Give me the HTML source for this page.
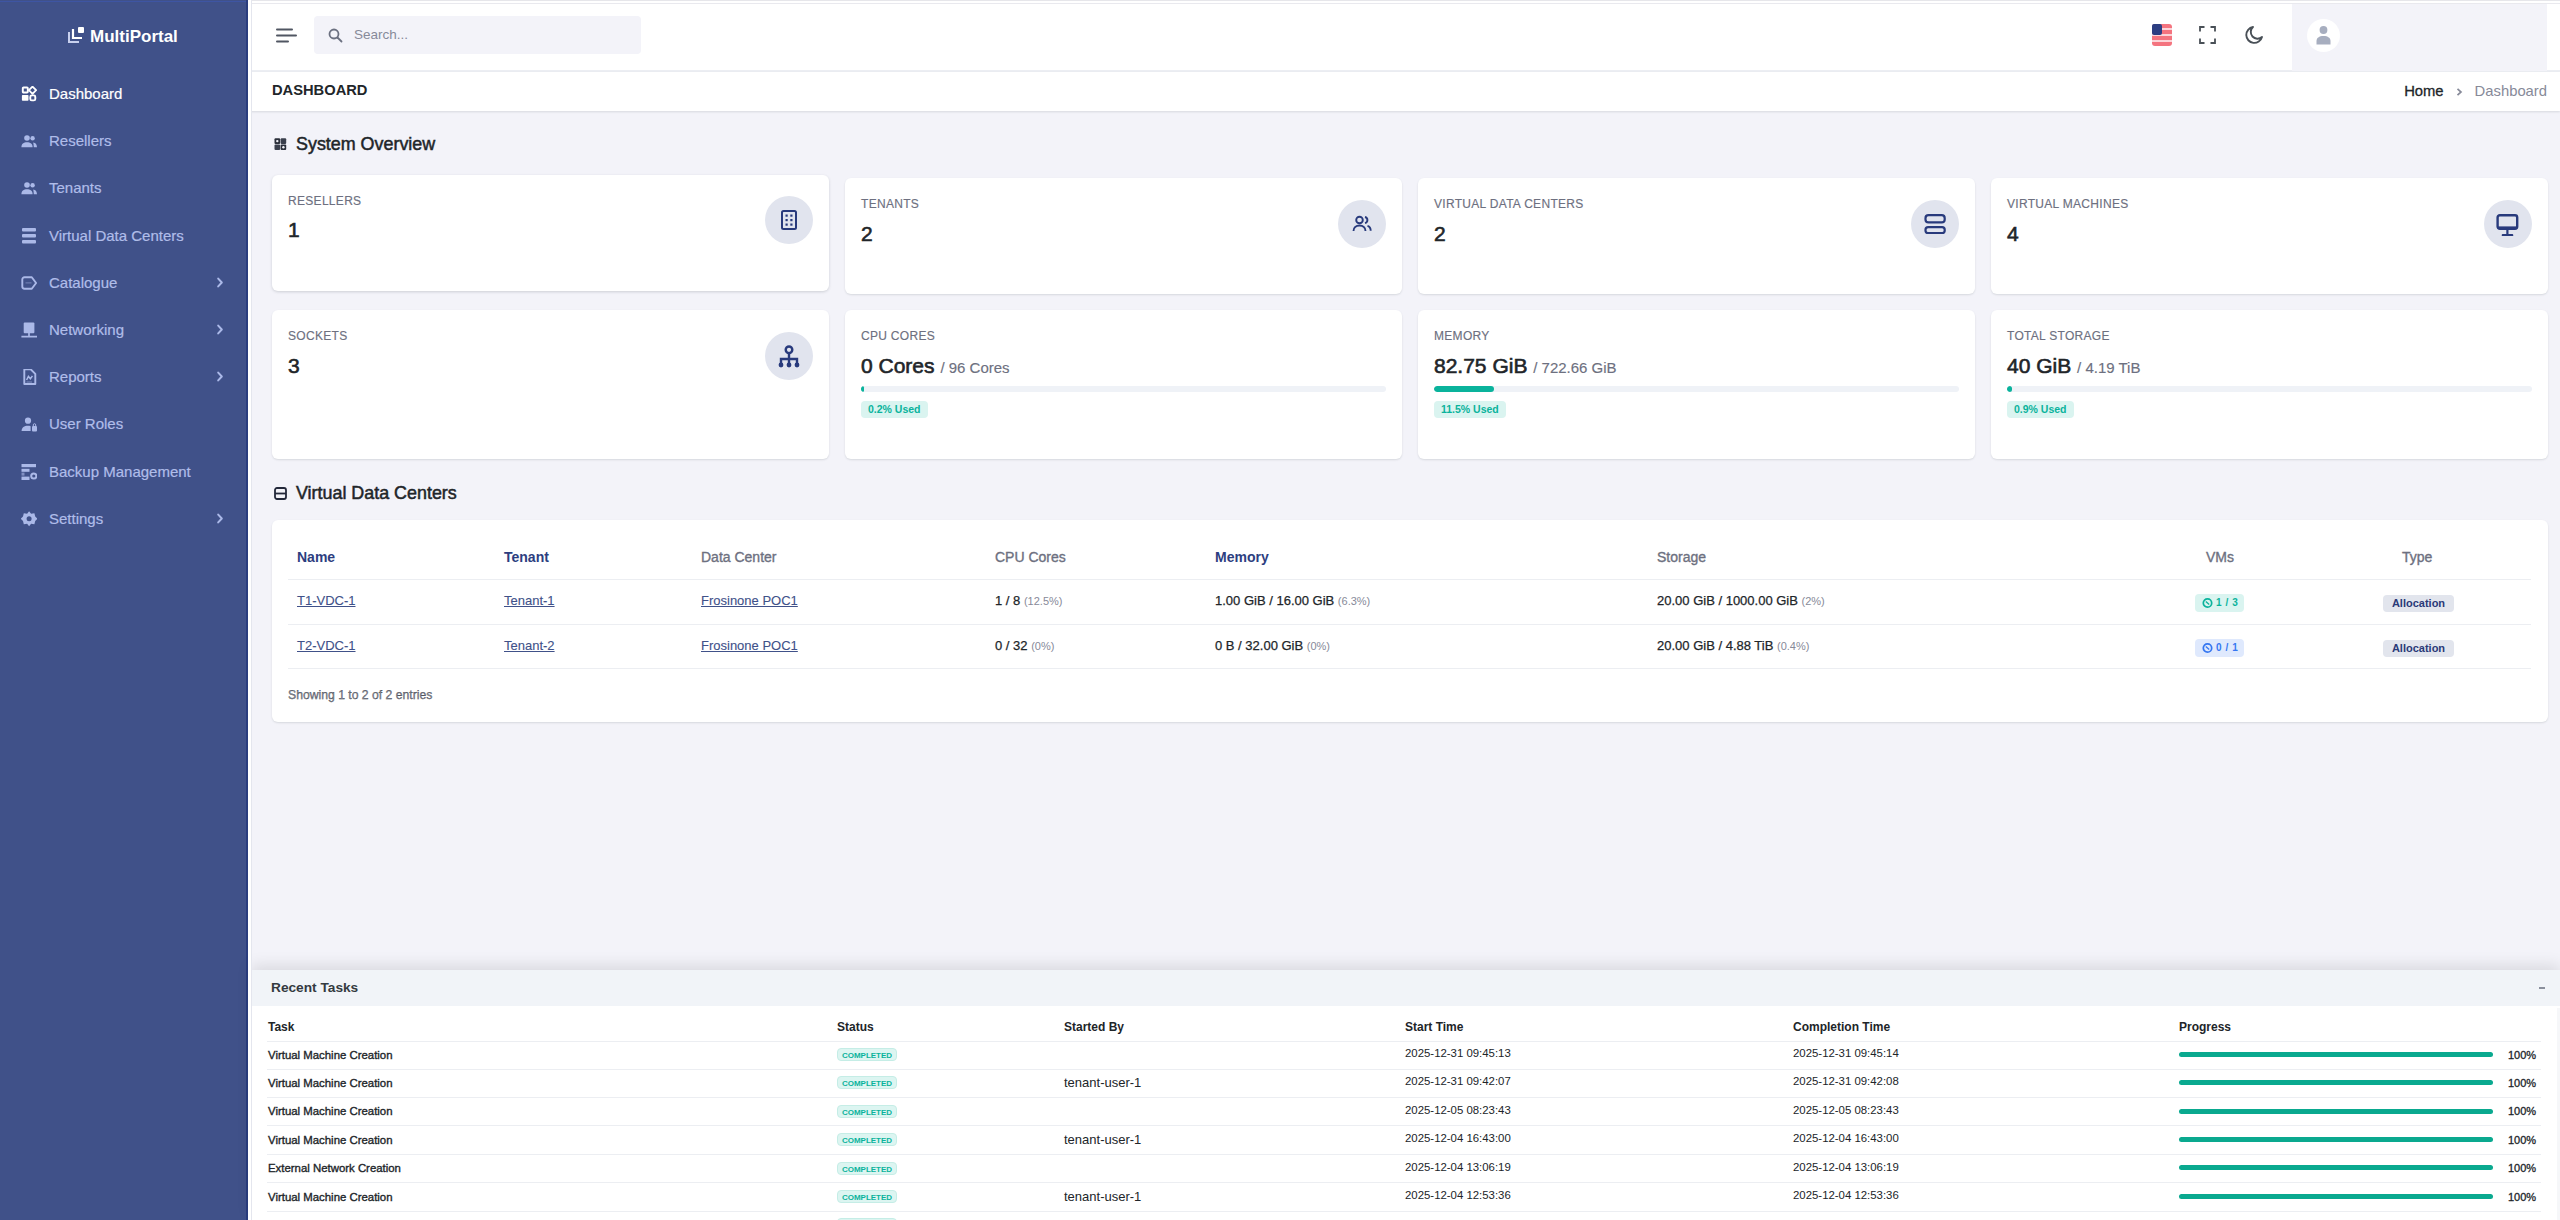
<!DOCTYPE html>
<html><head><meta charset="utf-8">
<style>
*{box-sizing:border-box;margin:0;padding:0}
html,body{width:2560px;height:1220px;overflow:hidden}
body{font-family:"Liberation Sans",sans-serif;background:#f3f3f9;position:relative;color:#212529}
.abs{position:absolute;white-space:nowrap}
#sidebar{position:absolute;left:0;top:0;width:248px;height:1220px;background:#405189}
#sidebar .edge{position:absolute;left:246px;top:0;width:2px;height:1220px;background:#2a3d7e}
.logo{position:absolute;left:90px;top:27px;font-weight:bold;font-size:17px;color:#fff;line-height:20px}
.mi{position:absolute;left:0;width:246px;height:24px}
.mi .t{position:absolute;left:49px;top:3px;font-size:15px;line-height:18px;color:#b0bde9;-webkit-text-stroke:0.2px #b0bde9}
.mi.active .t{color:#fff;-webkit-text-stroke:0.2px #fff}
.mi svg.ic{position:absolute;left:21px;top:4px;width:16px;height:16px}
.mi .chev{position:absolute;left:216px;top:6px;width:8px;height:12px}
#topbar{position:absolute;left:248px;top:0;width:2312px;height:72px;background:#fff;border-top:1px solid #e6e6ea}
#topbar .line2{position:absolute;left:0;top:2px;width:2312px;height:1px;background:#e9e9ee}
#topbar .bb{position:absolute;left:0;top:69px;width:2312px;height:2px;background:#eceef3}
.search{position:absolute;left:66px;top:15px;width:327px;height:38px;background:#f3f3f9;border-radius:4px}
.search .t{position:absolute;left:40px;top:11px;font-size:13.5px;line-height:16px;color:#878a99}
.user{position:absolute;left:2044px;top:3px;width:255px;height:67px;background:#f3f3f9}
.avatar{position:absolute;left:15px;top:15px;width:33px;height:33px;border-radius:50%;background:#fff}
#ptitle{position:absolute;left:248px;top:72px;width:2312px;height:39px;background:#fff;box-shadow:0 1px 2px rgba(56,65,74,.15)}
#ptitle .h{position:absolute;left:24px;top:10px;font-size:14.7px;font-weight:bold;line-height:17px;color:#212529;letter-spacing:0}
#ptitle .bc{position:absolute;right:13px;top:11px;font-size:14.8px;line-height:17px;color:#878a99}
#ptitle .bc b{font-weight:normal;color:#212529;-webkit-text-stroke:0.3px #212529}
.sec{position:absolute;font-size:17.9px;font-weight:normal;color:#212529;line-height:20px;-webkit-text-stroke:0.5px #212529}
.sec svg{position:absolute;left:-22px;top:4px}
.card{position:absolute;background:#fff;border-radius:6px;box-shadow:0 1px 2px rgba(56,65,74,.15)}
.card .lbl{position:absolute;left:16px;font-size:12px;line-height:14px;color:#6d7080;letter-spacing:0.3px;-webkit-text-stroke:0.15px #6d7080}
.card .num{position:absolute;left:16px;font-size:21px;line-height:24px;color:#212529;-webkit-text-stroke:0.6px #212529}
.card .num small{font-size:15px;color:#6d7080;-webkit-text-stroke:0.15px #6d7080}
.card .circ{position:absolute;right:16px;width:48px;height:48px;border-radius:50%;background:#e1e4ee}
.card .circ svg{position:absolute;left:12px;top:12px;width:24px;height:24px}
.prog{position:absolute;left:16px;right:16px;height:6px;border-radius:3px;background:#eff2f7;overflow:hidden}
.prog i{position:absolute;left:0;top:0;height:6px;background:#0ab39c;border-radius:3px}
.bdg{position:absolute;left:16px;height:17px;border-radius:4px;background:#daf4f0;color:#0ab39c;font-weight:bold;font-size:10.5px;line-height:17px;padding:0 7px}
#vdc{position:absolute;left:272px;top:520px;width:2276px;height:202px}
.th{position:absolute;top:29px;font-size:14px;font-weight:bold;line-height:16px;color:#2d3e80}
.th.g{color:#6d7080;font-weight:normal;-webkit-text-stroke:0.35px #6d7080}
.td{position:absolute;font-size:13px;line-height:16px;color:#212529;-webkit-text-stroke:0.25px #212529}
.td a{color:#405189;text-decoration:underline;-webkit-text-stroke:0.1px #405189}
.td span.m{color:#878a99;font-size:11px;-webkit-text-stroke:0}
.hr{position:absolute;left:16px;width:2243px;height:1px;background:#eceef2}
#tasks{position:absolute;left:251px;top:970px;width:2309px;height:250px;background:#fff;box-shadow:0 -5px 14px rgba(0,0,0,.1)}
#tasks .hd{position:absolute;left:0;top:0;width:100%;height:36px;background:#f1f4f8}
.tth{position:absolute;top:52px;font-size:12px;font-weight:bold;line-height:14px;color:#212529}
.ttd{position:absolute;font-size:11.4px;line-height:14px;color:#212529}
.ttd.n{-webkit-text-stroke:0.35px #212529}
.cbdg{position:absolute;left:586px;width:60px;height:13px;border-radius:4px;background:#dcf5f1;color:#0ab39c;font-size:8px;font-weight:bold;line-height:13px;text-align:center;border:1px solid #c5ede6}
.pbar{position:absolute;left:1928px;width:314px;height:5px;border-radius:2.5px;background:#0aa98f}
.thr{position:absolute;left:16px;width:2274px;height:1px;background:#eceef2}
</style></head><body>

<div id="sidebar">
  <div class="edge"></div><div class="abs" style="left:0;top:1px;width:246px;height:1px;background:#3e55a3"></div>
  <svg class="abs" style="left:67px;top:26px" width="18" height="18" viewBox="0 0 18 18"><path d="M2 6v10h10" fill="none" stroke="#c8d0ee" stroke-width="2"/><path d="M6 3v9h9" fill="none" stroke="#fff" stroke-width="2.2"/><rect x="11" y="1" width="6" height="6" rx="1" fill="#fff"/></svg>
  <div class="logo">MultiPortal</div>
  <div id="menu"><div class="mi active" style="top:81.5px"><svg class="ic" viewBox="0 0 16 16"><rect x="1.8" y="1.5" width="5" height="5" rx="0.8" fill="none" stroke="#fff" stroke-width="1.9"/><path d="M11.5 0.6l3.6 3.6-3.6 3.6-3.6-3.6z" fill="none" stroke="#fff" stroke-width="1.8" stroke-linejoin="round"/><rect x="0.9" y="9" width="6.6" height="5.8" rx="0.8" fill="#fff"/><rect x="9.3" y="9.4" width="5" height="5" rx="1.5" fill="none" stroke="#fff" stroke-width="1.9"/></svg><div class="t">Dashboard</div></div>
<div class="mi" style="top:129px"><svg class="ic" viewBox="0 0 16 16"><circle cx="6" cy="5" r="2.8" fill="#abb9e8"/><circle cx="11.6" cy="5.2" r="2.2" fill="#abb9e8"/><path d="M0.4 14.3c0-3.6 2.3-5 5.6-5s5.6 1.4 5.6 5z" fill="#abb9e8"/><path d="M12.2 9.4c2.4.2 3.6 1.8 3.8 4.9h-3.2c-.1-1.9-.3-3.6-.6-4.9z" fill="#abb9e8"/></svg><div class="t">Resellers</div></div>
<div class="mi" style="top:176px"><svg class="ic" viewBox="0 0 16 16"><circle cx="6" cy="5" r="2.8" fill="#abb9e8"/><circle cx="11.6" cy="5.2" r="2.2" fill="#abb9e8"/><path d="M0.4 14.3c0-3.6 2.3-5 5.6-5s5.6 1.4 5.6 5z" fill="#abb9e8"/><path d="M12.2 9.4c2.4.2 3.6 1.8 3.8 4.9h-3.2c-.1-1.9-.3-3.6-.6-4.9z" fill="#abb9e8"/></svg><div class="t">Tenants</div></div>
<div class="mi" style="top:223.5px"><svg class="ic" viewBox="0 0 16 16"><rect x="1" y="0" width="14" height="3.6" rx="1" fill="#abb9e8"/><rect x="1" y="6" width="14" height="3.6" rx="1" fill="#abb9e8"/><rect x="1" y="12" width="14" height="3.6" rx="1" fill="#abb9e8"/></svg><div class="t">Virtual Data Centers</div></div>
<div class="mi" style="top:270.5px"><svg class="ic" viewBox="0 0 16 16"><path d="M3.5 2.2h7.3l4.3 5.8-4.3 5.8H3.5a2.2 2.2 0 0 1-2.2-2.2V4.4a2.2 2.2 0 0 1 2.2-2.2z" fill="none" stroke="#abb9e8" stroke-width="1.9" stroke-linejoin="round"/><path d="M4.5 7.9h6" stroke="#abb9e8" stroke-width="1" opacity=".5"/></svg><div class="t">Catalogue</div><svg class="chev" viewBox="0 0 8 12"><path d="M2.2 1.6l3.6 3.9-3.6 3.9" fill="none" stroke="#abb9e8" stroke-width="2" stroke-linecap="round" stroke-linejoin="round"/></svg></div>
<div class="mi" style="top:318px"><svg class="ic" viewBox="0 0 16 16"><rect x="2.7" y="0.6" width="10.7" height="10.6" rx="1" fill="#abb9e8"/><path d="M8 11v3.2M0.4 14.6h15.8" stroke="#abb9e8" stroke-width="1.7"/></svg><div class="t">Networking</div><svg class="chev" viewBox="0 0 8 12"><path d="M2.2 1.6l3.6 3.9-3.6 3.9" fill="none" stroke="#abb9e8" stroke-width="2" stroke-linecap="round" stroke-linejoin="round"/></svg></div>
<div class="mi" style="top:365px"><svg class="ic" viewBox="0 0 16 16"><path d="M3.3 0.3h6.4l4.6 4.6v10.1H3.3z" fill="none" stroke="#abb9e8" stroke-width="1.9" stroke-linejoin="round"/><path d="M5.6 11l1.8-3.6 2 2.4 2-3" fill="none" stroke="#abb9e8" stroke-width="1.5"/><path d="M5.5 13h5.5" stroke="#abb9e8" stroke-width="1" opacity=".6"/></svg><div class="t">Reports</div><svg class="chev" viewBox="0 0 8 12"><path d="M2.2 1.6l3.6 3.9-3.6 3.9" fill="none" stroke="#abb9e8" stroke-width="2" stroke-linecap="round" stroke-linejoin="round"/></svg></div>
<div class="mi" style="top:412px"><svg class="ic" viewBox="0 0 16 16"><circle cx="7" cy="4.7" r="3.1" fill="#abb9e8"/><path d="M0.6 15c0-3.4 2.6-5.2 6.4-5.2 1 0 1.9.1 2.6.4v4.8z" fill="#abb9e8"/><rect x="11" y="10" width="5" height="5.6" rx="1" fill="#abb9e8"/><path d="M12.3 10V8.9a1.2 1.2 0 0 1 2.4 0V10" fill="none" stroke="#abb9e8" stroke-width="1"/></svg><div class="t">User Roles</div></div>
<div class="mi" style="top:459.5px"><svg class="ic" viewBox="0 0 16 16"><rect x="0.5" y="0" width="14.5" height="3.2" fill="#abb9e8"/><rect x="0.5" y="4.8" width="8" height="3" fill="#abb9e8"/><rect x="0.5" y="12.6" width="8" height="3.4" fill="#abb9e8"/><rect x="0.5" y="8.6" width="3" height="3" fill="#abb9e8" opacity=".6"/><circle cx="12.8" cy="12" r="2.6" fill="none" stroke="#abb9e8" stroke-width="2"/></svg><div class="t">Backup Management</div></div>
<div class="mi" style="top:506.5px"><svg class="ic" viewBox="0 0 16 16"><path d="M8.1 0.2l2 2.6 3.3-.5.8 3.2 2.3 2.2-2.3 2.3-.8 3.2-3.3-.5-2 2.6-2-2.6-3.3.5-.8-3.2L-.3 7.7 2 5.5l.8-3.2 3.3.5z" fill="#abb9e8"/><circle cx="8.1" cy="7.7" r="2.5" fill="#405189"/></svg><div class="t">Settings</div><svg class="chev" viewBox="0 0 8 12"><path d="M2.2 1.6l3.6 3.9-3.6 3.9" fill="none" stroke="#abb9e8" stroke-width="2" stroke-linecap="round" stroke-linejoin="round"/></svg></div>
</div>
</div>

<div id="topbar">
  <div class="line2"></div>
  <svg class="abs" style="left:28px;top:26px" width="22" height="16" viewBox="0 0 22 16"><path d="M1 2.6h15M1 8.6h19M1 14.6h11" stroke="#505662" stroke-width="2" stroke-linecap="round"/></svg>
  <div class="search">
    <svg class="abs" style="left:14px;top:12px" width="15" height="15" viewBox="0 0 15 15"><circle cx="6" cy="6" r="4.5" fill="none" stroke="#6b7080" stroke-width="1.8"/><path d="M9.5 9.5l4 4" stroke="#6b7080" stroke-width="1.8" stroke-linecap="round"/></svg>
    <div class="t">Search...</div>
  </div>
  <svg class="abs" style="left:1904px;top:23.3px" width="20" height="22" viewBox="0 0 20 22"><rect x="0" y="0" width="20" height="22" rx="3" fill="#f4747f"/><rect x="0" y="4" width="20" height="2" fill="#fff" opacity=".7"/><rect x="0" y="10" width="20" height="2" fill="#fff" opacity=".7"/><rect x="0" y="16" width="20" height="2" fill="#fff" opacity=".7"/><rect x="0" y="0" width="10" height="11" rx="2" fill="#2c3e82"/></svg>
  <svg class="abs" style="left:1951px;top:25px" width="17" height="18" viewBox="0 0 17 18"><path d="M1 5.5V1h4.5M11.5 1H16v4.5M16 12.5V17h-4.5M5.5 17H1v-4.5" fill="none" stroke="#495057" stroke-width="1.8"/></svg>
  <svg class="abs" style="left:1996px;top:24px" width="20" height="20" viewBox="0 0 20 20"><path d="M9 2a8 8 0 1 0 9 10a6.5 6.5 0 0 1-9-10z" fill="none" stroke="#495057" stroke-width="1.9" stroke-linejoin="round"/></svg>
  <div class="bb"></div>
  <div class="user"><div class="avatar">
    <svg class="abs" style="left:8px;top:6px" width="17" height="20" viewBox="0 0 17 20"><circle cx="8.5" cy="5" r="3.9" fill="#a7aebf"/><path d="M1.5 19.5v-3.5c0-3 2.5-5 7-5s7 2 7 5v3.5z" fill="#a7aebf"/></svg>
  </div></div>
</div>

<div id="ptitle">
  <div class="h">DASHBOARD</div>
  <div class="bc"><b>Home</b><span style="display:inline-block;width:31px"></span>Dashboard</div>
  <svg class="abs" style="left:2208px;top:15.5px" width="7" height="8" viewBox="0 0 7 8"><path d="M1.5 0.8L5 4L1.5 7.2" fill="none" stroke="#878a99" stroke-width="1.7"/></svg>
</div>

<div class="sec" style="left:296px;top:134px">
  <svg width="13" height="13" viewBox="0 0 13 13"><rect x="0.5" y="0.3" width="5.6" height="5.6" rx="1" fill="#2b2f3a"/><rect x="6.6" y="0.3" width="5.6" height="5.6" rx="1" fill="#3a3f4c"/><rect x="0.5" y="6.4" width="5.6" height="5.6" rx="1" fill="#3a3f4c"/><rect x="6.6" y="6.4" width="5.6" height="5.6" rx="1" fill="#2b2f3a"/><circle cx="3.3" cy="3.1" r="1.2" fill="#f3f3f9"/><circle cx="9.4" cy="9.2" r="1.2" fill="#f3f3f9"/></svg>
  System Overview</div>

<div class="card" style="left:272px;top:175px;width:556.5px;height:115.5px;box-shadow:0 1px 3px rgba(56,65,74,.2);"><div class="lbl" style="top:19px">RESELLERS</div><div class="num" style="top:43px">1</div><div class="circ" style="top:21px"><svg viewBox="0 0 24 24"><rect x="5" y="3" width="14" height="18" rx="1.5" fill="none" stroke="#283a7c" stroke-width="2"/><g fill="#283a7c"><rect x="8.5" y="6.5" width="2.2" height="2.2"/><rect x="13.3" y="6.5" width="2.2" height="2.2"/><rect x="8.5" y="11" width="2.2" height="2.2"/><rect x="13.3" y="11" width="2.2" height="2.2"/><rect x="8.5" y="15.5" width="2.2" height="2.2"/><rect x="13.3" y="15.5" width="2.2" height="2.2"/></g></svg></div></div>
<div class="card" style="left:845px;top:178px;width:556.5px;height:116px;"><div class="lbl" style="top:19px">TENANTS</div><div class="num" style="top:44px">2</div><div class="circ" style="top:22px"><svg viewBox="0 0 24 24"><circle cx="9.5" cy="8" r="3.3" fill="none" stroke="#283a7c" stroke-width="1.9"/><path d="M3.5 19c0-3.5 2.6-5.5 6-5.5s6 2 6 5.5" fill="none" stroke="#283a7c" stroke-width="1.9"/><path d="M15 5a3.2 3.2 0 0 1 0 6.2M17.5 13.8c2 .6 3.2 2.4 3.2 5" fill="none" stroke="#283a7c" stroke-width="1.9"/></svg></div></div>
<div class="card" style="left:1418px;top:178px;width:556.5px;height:116px;"><div class="lbl" style="top:19px">VIRTUAL DATA CENTERS</div><div class="num" style="top:44px">2</div><div class="circ" style="top:22px"><svg viewBox="0 0 24 24"><rect x="2.5" y="3.2" width="19.2" height="7.2" rx="3" fill="none" stroke="#283a7c" stroke-width="2.2"/><rect x="2.5" y="15.2" width="19.2" height="5.8" rx="2.6" fill="none" stroke="#283a7c" stroke-width="2.2"/></svg></div></div>
<div class="card" style="left:1991px;top:178px;width:556.5px;height:116px;"><div class="lbl" style="top:19px">VIRTUAL MACHINES</div><div class="num" style="top:44px">4</div><div class="circ" style="top:22px"><svg viewBox="0 0 24 24"><rect x="1.6" y="3.3" width="19.6" height="13.4" rx="2.2" fill="none" stroke="#283a7c" stroke-width="2.4"/><path d="M1.6 15.6h19.6" stroke="#283a7c" stroke-width="2.4"/><path d="M11.4 17.5v5M6.8 23.2h9.4" stroke="#283a7c" stroke-width="2.2" stroke-linecap="round"/></svg></div></div>
<div class="card" style="left:272px;top:310px;width:556.5px;height:148.5px"><div class="lbl" style="top:19px">SOCKETS</div><div class="num" style="top:44px">3</div><div class="circ" style="top:22px"><svg viewBox="0 0 24 24"><circle cx="12" cy="5.8" r="3.3" fill="none" stroke="#283a7c" stroke-width="2.4"/><path d="M12 9v10M4 20v-5h16v5" fill="none" stroke="#283a7c" stroke-width="2.4"/><circle cx="4" cy="21" r="2.4" fill="#283a7c"/><circle cx="12" cy="21" r="2.4" fill="#283a7c"/><circle cx="20" cy="21" r="2.4" fill="#283a7c"/></svg></div></div>
<div class="card" style="left:845px;top:310px;width:556.5px;height:148.5px"><div class="lbl" style="top:19px">CPU CORES</div><div class="num" style="top:44px">0 Cores <small>/ 96 Cores</small></div><div class="prog" style="top:76px"><i style="width:0.6%"></i></div><div class="bdg" style="top:91px">0.2% Used</div></div>
<div class="card" style="left:1418px;top:310px;width:556.5px;height:148.5px"><div class="lbl" style="top:19px">MEMORY</div><div class="num" style="top:44px">82.75 GiB <small>/ 722.66 GiB</small></div><div class="prog" style="top:76px"><i style="width:11.5%"></i></div><div class="bdg" style="top:91px">11.5% Used</div></div>
<div class="card" style="left:1991px;top:310px;width:556.5px;height:148.5px"><div class="lbl" style="top:19px">TOTAL STORAGE</div><div class="num" style="top:44px">40 GiB <small>/ 4.19 TiB</small></div><div class="prog" style="top:76px"><i style="width:0.9%"></i></div><div class="bdg" style="top:91px">0.9% Used</div></div>


<div class="sec" style="left:296px;top:483px">
  <svg width="13" height="13" viewBox="0 0 13 13"><rect x="1" y="1" width="11" height="11" rx="2" fill="none" stroke="#23283a" stroke-width="1.8"/><path d="M1 6.5h11" stroke="#23283a" stroke-width="1.8"/></svg>
  Virtual Data Centers</div>

<div id="vdc" class="card"><div class="th" style="left:25px">Name</div><div class="th" style="left:232px">Tenant</div><div class="th g" style="left:429px">Data Center</div><div class="th g" style="left:723px">CPU Cores</div><div class="th" style="left:943px">Memory</div><div class="th g" style="left:1385px">Storage</div><div class="th g" style="left:1934px">VMs</div><div class="th g" style="left:2130px">Type</div><div class="hr" style="top:59px"></div><div class="hr" style="top:104px"></div><div class="hr" style="top:148px"></div><div class="td" style="left:25px;top:73px"><a>T1-VDC-1</a></div><div class="td" style="left:232px;top:73px"><a>Tenant-1</a></div><div class="td" style="left:429px;top:73px"><a>Frosinone POC1</a></div><div class="td" style="left:723px;top:73px">1 / 8 <span class="m">(12.5%)</span></div><div class="td" style="left:943px;top:73px">1.00 GiB / 16.00 GiB <span class="m">(6.3%)</span></div><div class="td" style="left:1385px;top:73px">20.00 GiB / 1000.00 GiB <span class="m">(2%)</span></div><div class="abs" style="left:1923px;top:74px;width:49px;height:18px;border-radius:4px;background:#daf4f0;color:#0ab39c;font-size:10px;font-weight:bold;line-height:18px"><svg class="abs" style="left:7px;top:3px" width="11" height="12" viewBox="0 0 11 12"><circle cx="5.5" cy="6" r="4.2" fill="none" stroke="#0ab39c" stroke-width="1.7"/><path d="M3.8 4.5l3.4 3" stroke="#0ab39c" stroke-width="1.3"/></svg><span class="abs" style="left:21px;top:0;letter-spacing:1px">1&#8201;/&#8201;3</span></div><div class="abs" style="left:2111px;top:75px;width:71px;height:17px;border-radius:4px;background:#e2e5ed;color:#2a3a78;font-size:11px;font-weight:bold;line-height:17px;text-align:center">Allocation</div><div class="td" style="left:25px;top:118px"><a>T2-VDC-1</a></div><div class="td" style="left:232px;top:118px"><a>Tenant-2</a></div><div class="td" style="left:429px;top:118px"><a>Frosinone POC1</a></div><div class="td" style="left:723px;top:118px">0 / 32 <span class="m">(0%)</span></div><div class="td" style="left:943px;top:118px">0 B / 32.00 GiB <span class="m">(0%)</span></div><div class="td" style="left:1385px;top:118px">20.00 GiB / 4.88 TiB <span class="m">(0.4%)</span></div><div class="abs" style="left:1923px;top:119px;width:49px;height:18px;border-radius:4px;background:#dfe9fd;color:#3577f1;font-size:10px;font-weight:bold;line-height:18px"><svg class="abs" style="left:7px;top:3px" width="11" height="12" viewBox="0 0 11 12"><circle cx="5.5" cy="6" r="4.2" fill="none" stroke="#3577f1" stroke-width="1.7"/><path d="M3.8 4.5l3.4 3" stroke="#3577f1" stroke-width="1.3"/></svg><span class="abs" style="left:21px;top:0;letter-spacing:1px">0&#8201;/&#8201;1</span></div><div class="abs" style="left:2111px;top:120px;width:71px;height:17px;border-radius:4px;background:#e2e5ed;color:#2a3a78;font-size:11px;font-weight:bold;line-height:17px;text-align:center">Allocation</div><div class="td" style="left:16px;top:167px;font-size:12.2px;color:#878a99">Showing 1 to 2 of 2 entries</div></div>

<div id="tasks"><div class="hd"></div><div class="abs" style="left:20px;top:10px;font-size:13.7px;font-weight:bold;line-height:16px;color:#343a40">Recent Tasks</div><div class="abs" style="left:2288px;top:17px;width:6px;height:2px;background:#8a8f9c"></div><div class="abs" style="left:2305.5px;top:38px;width:3.5px;height:212px;background:#f6f7f9"></div><div class="tth" style="left:17px;top:50px">Task</div><div class="tth" style="left:586px;top:50px">Status</div><div class="tth" style="left:813px;top:50px">Started By</div><div class="tth" style="left:1154px;top:50px">Start Time</div><div class="tth" style="left:1542px;top:50px">Completion Time</div><div class="tth" style="left:1928px;top:50px">Progress</div><div class="thr" style="top:71px"></div><div class="ttd n" style="left:17px;top:77.5px">Virtual Machine Creation</div><div class="cbdg" style="top:78.0px">COMPLETED</div><div class="ttd" style="left:1154px;top:76.0px">2025-12-31 09:45:13</div><div class="ttd" style="left:1542px;top:76.0px">2025-12-31 09:45:14</div><div class="pbar" style="top:81.8px"></div><div class="ttd" style="left:2257px;top:77.5px;font-size:11px;-webkit-text-stroke:0.3px #212529">100%</div><div class="thr" style="top:98.5px"></div><div class="ttd n" style="left:17px;top:105.90000000000009px">Virtual Machine Creation</div><div class="cbdg" style="top:106.40000000000009px">COMPLETED</div><div class="ttd" style="left:813px;top:105.90000000000009px;font-size:13px">tenant-user-1</div><div class="ttd" style="left:1154px;top:104.40000000000009px">2025-12-31 09:42:07</div><div class="ttd" style="left:1542px;top:104.40000000000009px">2025-12-31 09:42:08</div><div class="pbar" style="top:110.20000000000009px"></div><div class="ttd" style="left:2257px;top:105.90000000000009px;font-size:11px;-webkit-text-stroke:0.3px #212529">100%</div><div class="thr" style="top:126.90000000000009px"></div><div class="ttd n" style="left:17px;top:134.29999999999995px">Virtual Machine Creation</div><div class="cbdg" style="top:134.79999999999995px">COMPLETED</div><div class="ttd" style="left:1154px;top:132.79999999999995px">2025-12-05 08:23:43</div><div class="ttd" style="left:1542px;top:132.79999999999995px">2025-12-05 08:23:43</div><div class="pbar" style="top:138.59999999999997px"></div><div class="ttd" style="left:2257px;top:134.29999999999995px;font-size:11px;-webkit-text-stroke:0.3px #212529">100%</div><div class="thr" style="top:155.29999999999995px"></div><div class="ttd n" style="left:17px;top:162.70000000000005px">Virtual Machine Creation</div><div class="cbdg" style="top:163.20000000000005px">COMPLETED</div><div class="ttd" style="left:813px;top:162.70000000000005px;font-size:13px">tenant-user-1</div><div class="ttd" style="left:1154px;top:161.20000000000005px">2025-12-04 16:43:00</div><div class="ttd" style="left:1542px;top:161.20000000000005px">2025-12-04 16:43:00</div><div class="pbar" style="top:167.00000000000006px"></div><div class="ttd" style="left:2257px;top:162.70000000000005px;font-size:11px;-webkit-text-stroke:0.3px #212529">100%</div><div class="thr" style="top:183.70000000000005px"></div><div class="ttd n" style="left:17px;top:191.0999999999999px">External Network Creation</div><div class="cbdg" style="top:191.5999999999999px">COMPLETED</div><div class="ttd" style="left:1154px;top:189.5999999999999px">2025-12-04 13:06:19</div><div class="ttd" style="left:1542px;top:189.5999999999999px">2025-12-04 13:06:19</div><div class="pbar" style="top:195.39999999999992px"></div><div class="ttd" style="left:2257px;top:191.0999999999999px;font-size:11px;-webkit-text-stroke:0.3px #212529">100%</div><div class="thr" style="top:212.0999999999999px"></div><div class="ttd n" style="left:17px;top:219.5px">Virtual Machine Creation</div><div class="cbdg" style="top:220.0px">COMPLETED</div><div class="ttd" style="left:813px;top:219.5px;font-size:13px">tenant-user-1</div><div class="ttd" style="left:1154px;top:218.0px">2025-12-04 12:53:36</div><div class="ttd" style="left:1542px;top:218.0px">2025-12-04 12:53:36</div><div class="pbar" style="top:223.8px"></div><div class="ttd" style="left:2257px;top:219.5px;font-size:11px;-webkit-text-stroke:0.3px #212529">100%</div><div class="thr" style="top:240.5px"></div><div class="cbdg" style="top:248.4000000000001px">COMPLETED</div></div>

<div class="abs" style="left:248px;top:0;width:3px;height:1220px;background:#fff;z-index:5"></div><div class="abs" style="left:251px;top:0;width:1px;height:1220px;background:#e4e6ee;z-index:5"></div>
</body></html>
